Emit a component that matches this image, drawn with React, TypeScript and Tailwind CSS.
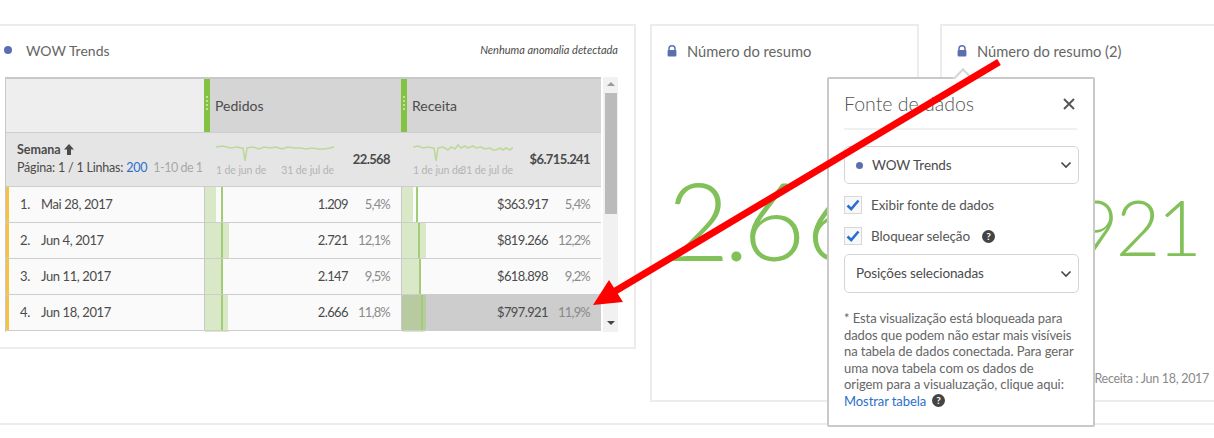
import React from "react";

const rows = [
  { n: "1.", d: "Mai 28, 2017", a: "1.209", ap: "5,4%", af: 11, al: 16, b: "$363.917", bp: "5,4%", bf: 11, bl: 14 },
  { n: "2.", d: "Jun 4, 2017", a: "2.721", ap: "12,1%", af: 24, al: 16, b: "$819.266", bp: "12,2%", bf: 24, bl: 16 },
  { n: "3.", d: "Jun 11, 2017", a: "2.147", ap: "9,5%", af: 16, al: 16, b: "$618.898", bp: "9,2%", bf: 17, bl: 17 },
  { n: "4.", d: "Jun 18, 2017", a: "2.666", ap: "11,8%", af: 23, al: 16, b: "$797.921", bp: "11,9%", bf: 24, bl: 19, sel: true },
];

function Lock() {
  return (
    <svg width="10" height="12" viewBox="0 0 10 12" className="shrink-0">
      <path d="M2 5V3.6C2 1.9 3.3.8 5 .8s3 1.1 3 2.8V5" fill="none" stroke="#5b6fb0" strokeWidth="1.5" />
      <rect x="0.6" y="5" width="8.8" height="6.4" rx="0.8" fill="#5b6fb0" />
    </svg>
  );
}

function Spark({ alt }: { alt?: boolean }) {
  return alt ? (
    <svg width="100" height="20" viewBox="0 0 100 20" className="block">
      <path d="M0 3 L5 2 L10 4 L16 3 L19 4 L21 4 L23 17 L25 4 L30 3 L35 6 L38 3 L42 5 L45 1 L48 4 L52 2 L55 4 L60 2 L63 4 L68 3 L72 5 L77 4 L80 6 L83 6 L87 4 L90 6 L93 4 L97 6 L100 3" fill="none" stroke="#bcd99a" strokeWidth="1.6" />
    </svg>
  ) : (
    <svg width="118" height="20" viewBox="0 0 118 20" className="block">
      <path d="M0 3 L7 2 L14 4 L22 3 L24 4 L27 4 L29 17 L31 4 L37 3 L43 5 L48 3 L54 4 L60 3 L66 5 L72 3 L78 4 L84 4 L90 5 L96 4 L102 5 L108 5 L114 4 L118 3" fill="none" stroke="#bcd99a" strokeWidth="1.6" />
    </svg>
  );
}

function MetricHead({ label }: { label: string }) {
  return (
    <div className="flex items-center bg-[#d5d5d5]">
      <div className="w-[6px] self-stretch bg-[#82c341] flex flex-col items-center justify-center gap-[2px] pb-[6px]">
        {[0, 1, 2, 3].map((i) => (
          <span key={i} className="w-[2px] h-[2px] bg-[#d8ecc0] rounded-full" />
        ))}
      </div>
      <span className="ml-[5px] text-[14px] text-[#4b4b4b]">{label}</span>
    </div>
  );
}

function MetricSummary({ total, alt }: { total: string; alt?: boolean }) {
  return (
    <div className="flex items-center pl-[12px] pr-[11px]">
      <div className={`${alt ? "w-[100px]" : "w-[118px]"} shrink-0 flex flex-col`}>
        <Spark alt={alt} />
        <div className="flex justify-between text-[10.5px] leading-[12px] text-[#b4b4b4] whitespace-nowrap tracking-[-0.1px]">
          <span>1 de jun de</span>
          <span className={alt ? "-ml-[10px]" : ""}>31 de jul de</span>
        </div>
      </div>
      <span className="ml-auto text-[13px] font-bold text-[#4b4b4b] whitespace-nowrap tracking-[-0.6px]">{total}</span>
    </div>
  );
}

function MetricCell({ v, p, fill, line, sel }: { v: string; p: string; fill: number; line: number; sel?: boolean }) {
  return (
    <div className={`flex items-center border-l border-[#c8c8c8] pr-[11px] ${sel ? "bg-[#cdcdcd]" : ""}`}>
      <div className="relative w-[28px] self-stretch shrink-0">
        <div className={`h-full ${sel ? "bg-[#b7caa0]" : "bg-[#d9e8c6]"}`} style={{ width: fill }} />
        <div className="absolute top-0 bottom-0 w-[2px] bg-[#a3cc76]" style={{ left: line }} />
      </div>
      <span className="ml-auto text-[13px] text-[#4b4b4b] tracking-[-0.6px]">{v}</span>
      <span className="w-[42px] text-right text-[13px] text-[#8a8a8a] tracking-[-0.8px]">{p}</span>
    </div>
  );
}

function Table() {
  const cols = "grid grid-cols-[198px_197px_200px]";
  return (
    <div className="ml-[5px] mt-[3px] w-[613px] h-[255px] flex overflow-hidden [&>*]:shrink-0">
      <div className="w-[596px] border-l border-t-2 border-[#c8c8c8]">
        <div className={`${cols} h-[53px] bg-[#eeeeee]`}>
          <div />
          <MetricHead label="Pedidos" />
          <MetricHead label="Receita" />
        </div>
        <div className={`${cols} h-[55px] bg-[#e5e5e5] border-y border-[#cdcdcd]`}>
          <div className="pl-[11px] pt-[8px]">
            <div className="flex items-center gap-[3px] text-[12.5px] leading-[17px] font-bold text-[#4b4b4b]">
              Semana
              <svg width="10" height="11" viewBox="0 0 10 11"><path d="M5 0 L10 5.5 H7 V11 H3 V5.5 H0 Z" fill="#4b4b4b" /></svg>
            </div>
            <div className="text-[12.5px] leading-[19px] text-[#4b4b4b] whitespace-nowrap tracking-[-0.2px]">
              Página: 1 / 1 Linhas: <span className="text-[#2d6ecd]">200</span>
              <span className="ml-[6px] text-[#a8a8a8] tracking-[-0.5px]">1-10 de 1</span>
            </div>
          </div>
          <MetricSummary total="22.568" />
          <MetricSummary total="$6.715.241" alt />
        </div>
        {rows.map((r) => (
          <div key={r.n} className={`${cols} h-[36px] bg-[#fafafa] border-b border-[#cdcdcd]`}>
            <div className="flex items-center border-l-[3px] border-[#f5c242] text-[13px] text-[#4b4b4b] tracking-[-0.4px]">
              <span className="w-[32px] pl-[11px]">{r.n}</span>
              <span>{r.d}</span>
            </div>
            <MetricCell v={r.a} p={r.ap} fill={r.af} line={r.al} />
            <MetricCell v={r.b} p={r.bp} fill={r.bf} line={r.bl} sel={r.sel} />
          </div>
        ))}
        <div className={`${cols} h-[4px]`}>
          <div />
          <div className="pl-[1px]"><div className="h-full w-[24px] bg-[#d9e8c6]" /></div>
          <div className="pl-[1px]"><div className="h-full w-[23px] bg-[#d9e8c6]" /></div>
        </div>
      </div>
      <div className="w-[15px] ml-[2px] bg-[#f1f1f1] flex flex-col items-center pt-[5px]">
        <div className="w-0 h-0 border-x-[4px] border-x-transparent border-b-[4px] border-b-[#9a9a9a]" />
        <div className="w-[12px] h-[121px] mt-[7px] bg-[#bbbbbb]" />
        <div className="w-0 h-0 mt-[107px] border-x-[4px] border-x-transparent border-t-[4px] border-t-[#444444]" />
      </div>
    </div>
  );
}

function Help({ className }: { className?: string }) {
  return (
    <span className={`w-[13px] h-[13px] rounded-full bg-[#444444] text-white text-[10px] font-bold leading-[13px] text-center ${className ?? ""}`}>?</span>
  );
}

function Check({ label, help }: { label: string; help?: boolean }) {
  return (
    <div className="flex items-center h-[18px]">
      <div className="w-[18px] h-[18px] border border-[#d8d8d8] bg-[#f8f8f8] flex items-center justify-center">
        <svg width="14" height="12" viewBox="0 0 14 12"><path d="M1.5 6.5 L5.2 10 L12.5 1.5" fill="none" stroke="#2a6fd0" strokeWidth="2.6" /></svg>
      </div>
      <span className="ml-[9px] text-[13.5px] text-[#555555] tracking-[-0.1px]">{label}</span>
      {help && <Help className="ml-[12px]" />}
    </div>
  );
}

function Select({ children, className }: { children: React.ReactNode; className?: string }) {
  return (
    <div className={`flex items-center w-[235px] border border-[#d5d5d5] rounded-[5px] pl-[11px] pr-[6px] text-[13.5px] text-[#4b4b4b] tracking-[-0.1px] ${className ?? ""}`}>
      {children}
      <svg className="ml-auto" width="12" height="8" viewBox="0 0 12 8"><path d="M1.5 1.5 L6 6 L10.5 1.5" fill="none" stroke="#444444" strokeWidth="1.6" /></svg>
    </div>
  );
}

function Popover() {
  return (
    <div className="absolute left-[827px] top-[77px] w-[268px] h-[350px] bg-white border-2 border-[#c9c9c9] rounded-[2px] px-[15px]">
      <div className="absolute -top-[8px] left-[127px] w-[14px] h-[14px] rotate-45 bg-white border-l-2 border-t-2 border-[#d5d5d5]" />
      <div className="relative flex items-center h-[51px] border-b-2 border-[#f0f0f0] w-[233px]">
        <span className="text-[19.5px] font-light text-[#555555] mt-[1px]">Fonte de dados</span>
        <svg className="ml-auto mr-[2px]" width="12" height="12" viewBox="0 0 12 12"><path d="M1 1 L11 11 M11 1 L1 11" stroke="#555555" strokeWidth="1.9" /></svg>
      </div>
      <Select className="h-[38px] mt-[16px]">
        <span className="w-[7px] h-[7px] rounded-full bg-[#5b6fb0] mr-[9px]" />
        WOW Trends
      </Select>
      <div className="mt-[12px]"><Check label="Exibir fonte de dados" /></div>
      <div className="mt-[13px]"><Check label="Bloquear seleção" help /></div>
      <Select className="h-[39px] mt-[9px]">Posições selecionadas</Select>
      <div className="mt-[17px] text-[13px] leading-[16.5px] text-[#666666] whitespace-nowrap tracking-[-0.08px]">
        <div>* Esta visualização está bloqueada para</div>
        <div>dados que podem não estar mais visíveis</div>
        <div>na tabela de dados conectada. Para gerar</div>
        <div>uma nova tabela com os dados de</div>
        <div>origem para a visualuzação, clique aqui:</div>
        <div className="flex items-center text-[#2d6ecd]">
          Mostrar tabela
          <Help className="ml-[6px]" />
        </div>
      </div>
    </div>
  );
}

function PanelTitle({ children }: { children: React.ReactNode }) {
  return (
    <div className="flex items-center gap-[10px] pl-[15px] h-[50px] text-[14.7px] text-[#666666]">
      <Lock />
      {children}
    </div>
  );
}

export default function App() {
  return (
    <div className="relative w-[1214px] h-[438px] overflow-hidden bg-white [font-family:Lato,sans-serif]">
      <div className="flex items-start pt-[24px]">
        <div className="w-[636px] h-[325px] shrink-0 border-y-2 border-r-2 border-[#ececec]">
          <div className="flex items-center h-[48px] pl-[4px] pr-[16px]">
            <span className="w-[8px] h-[8px] rounded-full bg-[#5b6fb0]" />
            <span className="ml-[14px] text-[14px] text-[#666666]">WOW Trends</span>
            <span className="ml-auto text-[11px] italic text-[#4b4b4b]">Nenhuma anomalia detectada</span>
          </div>
          <Table />
        </div>
        <div className="ml-[14px] w-[269px] h-[378px] shrink-0 border-2 border-[#ececec] overflow-hidden">
          <PanelTitle>Número do resumo</PanelTitle>
          <div className="pl-[15px] mt-[78px] text-[108px] leading-[130px] font-light text-[#82c05a] whitespace-nowrap">
            2<span className="-ml-[6px] -mr-[6px]">.</span>666
          </div>
        </div>
        <div className="ml-[21px] w-[274px] h-[378px] shrink-0 border-y-2 border-l-2 border-[#ececec] overflow-hidden flex flex-col">
          <PanelTitle>Número do resumo (2)</PanelTitle>
          <div className="mt-[100px] pr-[15px] flex justify-end text-[77px] leading-[100px] font-light text-[#82c05a] whitespace-nowrap tracking-[-3px]">
            <span className="shrink-0">$797.921</span>
          </div>
          <div className="mt-[94px] pr-[5px] text-right text-[12.5px] text-[#8a8a8a] whitespace-nowrap tracking-[-0.3px]">Receita : Jun 18, 2017</div>
        </div>
      </div>
      <div className="mt-[21px] border-t-2 border-[#ececec]" />
      <Popover />
      <svg className="absolute inset-0 pointer-events-none" width="1214" height="438" viewBox="0 0 1214 438">
        <path d="M999 62 L612 293" stroke="#ff0000" strokeWidth="7" />
        <path d="M593 305 L609 280 L623 302 Z" fill="#ff0000" />
      </svg>
    </div>
  );
}
